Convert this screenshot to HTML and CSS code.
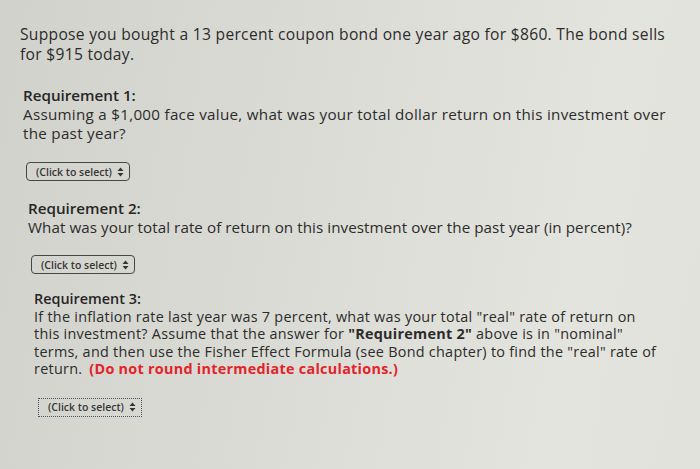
FILE: index.html
```html
<!DOCTYPE html>
<html>
<head>
<meta charset="utf-8">
<link rel="stylesheet" href="styles.css">
</head>
<body>
<div class="page">
  <p class="intro">Suppose you bought a 13 percent coupon bond one year ago for $860. The bond sells<br>for $915 today.</p>

  <div class="req req1">
    <h3>Requirement 1:</h3>
    <p>Assuming a $1,000 face value, what was your total dollar return on this investment over<br>the past year?</p>
  </div>
  <div class="pick pick1"><span class="select">(Click to select) <svg width="7" height="10" viewBox="0 0 7 10"><path d="M3.5 0.5 L6.5 4 L0.5 4 Z M3.5 9.5 L6.5 6 L0.5 6 Z" fill="#333"/></svg></span></div>

  <div class="req req2">
    <h3>Requirement 2:</h3>
    <p>What was your total rate of return on this investment over the past year (in percent)?</p>
  </div>
  <div class="pick pick2"><span class="select">(Click to select) <svg width="7" height="10" viewBox="0 0 7 10"><path d="M3.5 0.5 L6.5 4 L0.5 4 Z M3.5 9.5 L6.5 6 L0.5 6 Z" fill="#333"/></svg></span></div>

  <div class="req req3">
    <h3>Requirement 3:</h3>
    <p>If the inflation rate last year was 7 percent, what was your total "real" rate of return on<br>this investment? Assume that the answer for <b>"Requirement 2"</b> above is in "nominal"<br>terms, and then use the Fisher Effect Formula (see Bond chapter) to find the "real" rate of<br>return. <span class="warn">(Do not round intermediate calculations.)</span></p>
  </div>
  <div class="pick pick3"><span class="select focus">(Click to select) <svg width="7" height="10" viewBox="0 0 7 10"><path d="M3.5 0.5 L6.5 4 L0.5 4 Z M3.5 9.5 L6.5 6 L0.5 6 Z" fill="#333"/></svg></span></div>
</div>
</body>
</html>
```

FILE: styles.css
```css
html, body {
  margin: 0;
  padding: 0;
  height: 100%;
}
body {
  background: linear-gradient(100deg, #d2d2cc 0%, #dcdcd6 45%, #e4e4de 80%, #e2e2dc 100%);
  font-family: "Open Sans", Lato, sans-serif;
  color: #2c2c2c;
  overflow: hidden;
}
.page {
  padding-top: 24px;
}
p, h3 {
  margin: 0;
}
.intro {
  padding-left: 20px;
  font-size: 15.6px;
  line-height: 20px;
  letter-spacing: 0.3px;
}
.req h3 {
  font-size: 15.2px;
  font-weight: 600;
  line-height: 19px;
  color: #262626;
}
.req p {
  font-size: 15.2px;
  line-height: 19px;
  letter-spacing: 0.28px;
}
.req1 {
  padding-left: 23px;
  margin-top: 22px;
}
.req2 {
  padding-left: 28px;
  margin-top: 18px;
}
.req2 p {
  letter-spacing: 0.06px;
}
.req3 {
  padding-left: 34px;
  margin-top: 16px;
}
.req3 h3 {
  font-size: 14.4px;
  line-height: 17.6px;
}
.req3 p {
  font-size: 14.4px;
  line-height: 17.6px;
  letter-spacing: 0.27px;
}
.req3 b {
  font-weight: 700;
}
.warn {
  color: #e3232a;
  font-weight: 700;
  margin-left: 3px;
}
.pick {
  display: flex;
}
.pick1 {
  padding-left: 26px;
  margin-top: 19px;
}
.pick2 {
  padding-left: 31px;
  margin-top: 18px;
}
.pick3 {
  padding-left: 38px;
  margin-top: 20px;
}
.select {
  display: inline-flex;
  align-items: center;
  gap: 5px;
  box-sizing: border-box;
  height: 19px;
  padding: 0 5px 0 9px;
  border: 1.5px solid #474747;
  border-radius: 4px;
  font-size: 10.5px;
  font-weight: 600;
  color: #363636;
  font-family: "Open Sans", Lato, sans-serif;
  white-space: nowrap;
  flex-shrink: 0;
}
.focus {
  border: 1.5px dotted #4a4f66;
  border-radius: 0;
}
```
